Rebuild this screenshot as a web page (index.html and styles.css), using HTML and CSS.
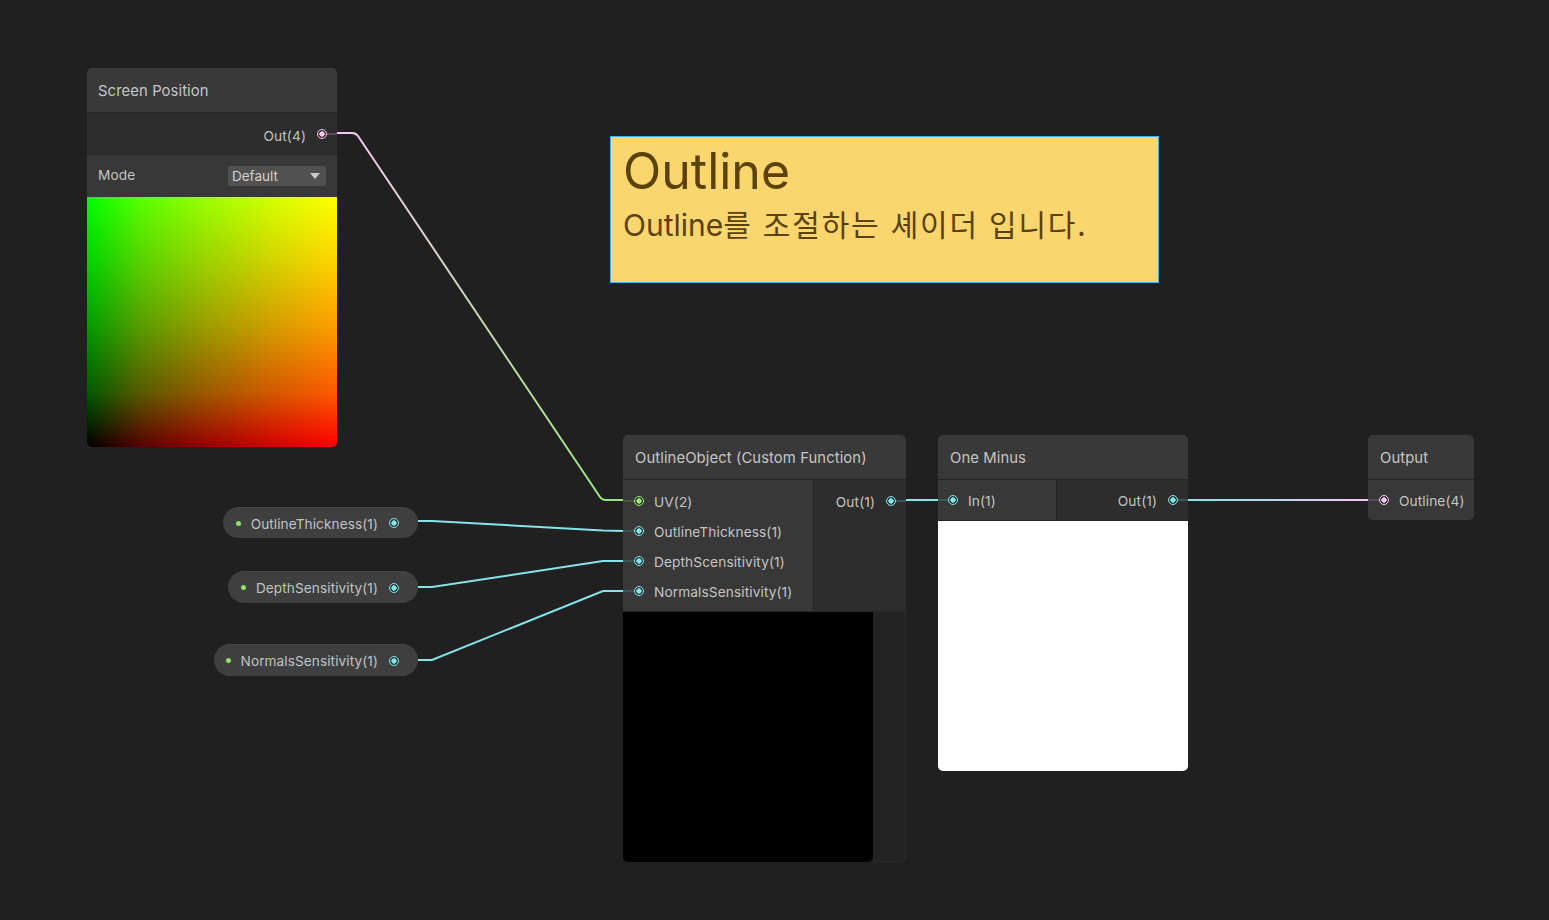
FILE: index.html
```html
<!DOCTYPE html>
<html lang="ko">
<head>
<meta charset="utf-8">
<title>Shader Graph</title>
<link rel="stylesheet" href="styles.css">
</head>
<body>
<div class="canvas">
  <svg class="wires" width="1549" height="920" viewBox="0 0 1549 920">
    <defs>
      <linearGradient id="g1" gradientUnits="userSpaceOnUse" x1="337" y1="133" x2="623" y2="500">
        <stop offset="0" stop-color="#f6c8f0"/>
        <stop offset="1" stop-color="#98e67a"/>
      </linearGradient>
      <linearGradient id="g2" gradientUnits="userSpaceOnUse" x1="1188" y1="500" x2="1368" y2="500">
        <stop offset="0" stop-color="#84e4e7"/>
        <stop offset="1" stop-color="#f6c8f0"/>
      </linearGradient>
    </defs>
    <path d="M337 133 L352 133 Q356 133 358 136 L600 497 Q602 500 606 500 L623 500" stroke="url(#g1)" stroke-width="2" fill="none"/>
    <path d="M418 521 L432 521 L603 530.5 L623 531" stroke="#84e4e7" stroke-width="2" fill="none"/>
    <path d="M418 587 L432 587 L603 561 L623 561" stroke="#84e4e7" stroke-width="2" fill="none"/>
    <path d="M418 660 L432 660 L603 591 L623 591" stroke="#84e4e7" stroke-width="2" fill="none"/>
    <path d="M906 500 L938 500" stroke="#84e4e7" stroke-width="2" fill="none"/>
    <path d="M1188 500 L1368 500" stroke="url(#g2)" stroke-width="2" fill="none"/>
  </svg>

  <div class="node node-sp">
    <div class="node-head">Screen Position</div>
    <div class="row row-out">
      <span class="label">Out(4)</span>
      <span class="port pink"></span><span class="stub stub-pink"></span>
    </div>
    <div class="row row-mode">
      <span class="label">Mode</span>
      <span class="dropdown">Default<span class="caret"></span></span>
    </div>
    <div class="preview preview-grad"></div>
  </div>

  <div class="sticky">
    <div class="sticky-title">Outline</div>
    <div class="sticky-text">Outline<span class="ko">를 조절하는 셰이더 입니다.</span></div>
  </div>

  <div class="prop prop-1">
    <span class="dot"></span><span class="prop-label">OutlineThickness(1)</span><span class="port cyan"></span>
  </div>
  <div class="prop prop-2">
    <span class="dot"></span><span class="prop-label">DepthSensitivity(1)</span><span class="port cyan"></span>
  </div>
  <div class="prop prop-3">
    <span class="dot"></span><span class="prop-label">NormalsSensitivity(1)</span><span class="port cyan"></span>
  </div>

  <div class="node node-cf">
    <div class="node-head">OutlineObject (Custom Function)</div>
    <div class="ports">
      <div class="inputs inputs-cf">
        <div class="in-row"><span class="stub stub-green"></span><span class="port green"></span><span class="label">UV(2)</span></div>
        <div class="in-row"><span class="stub stub-cyan"></span><span class="port cyan"></span><span class="label">OutlineThickness(1)</span></div>
        <div class="in-row"><span class="stub stub-cyan"></span><span class="port cyan"></span><span class="label">DepthScensitivity(1)</span></div>
        <div class="in-row"><span class="stub stub-cyan"></span><span class="port cyan"></span><span class="label">NormalsSensitivity(1)</span></div>
      </div>
      <div class="outputs outputs-cf">
        <div class="out-row"><span class="label">Out(1)</span><span class="port cyan"></span><span class="stub stub-cyan"></span></div>
      </div>
    </div>
    <div class="preview-wrap">
      <div class="preview preview-black"></div>
      <div class="preview-rest"></div>
    </div>
  </div>

  <div class="node node-om">
    <div class="node-head">One Minus</div>
    <div class="ports ports-single">
      <div class="inputs inputs-om">
        <div class="in-row in-row-om"><span class="stub stub-cyan"></span><span class="port cyan"></span><span class="label">In(1)</span></div>
      </div>
      <div class="outputs outputs-om">
        <div class="out-row out-row-om"><span class="label">Out(1)</span><span class="port cyan"></span><span class="stub stub-cyan"></span></div>
      </div>
    </div>
    <div class="preview preview-white"></div>
  </div>

  <div class="node node-out">
    <div class="node-head">Output</div>
    <div class="ports ports-single">
      <div class="inputs inputs-out">
        <div class="in-row in-row-om"><span class="stub stub-pink"></span><span class="port pink"></span><span class="label">Outline(4)</span></div>
      </div>
    </div>
  </div>
</div>
</body>
</html>
```

FILE: styles.css
```css
* { box-sizing: border-box; }
html, body {
  margin: 0;
  padding: 0;
  background: #202020;
}
body {
  font-family: "Inter", "Noto Sans", "Noto Sans CJK KR", sans-serif;
  color: #c4c4c4;
}
.canvas {
  position: relative;
  width: 1549px;
  height: 920px;
  overflow: hidden;
  background: #202020;
}
.wires {
  position: absolute;
  left: 0;
  top: 0;
}

/* generic node */
.node {
  position: absolute;
  display: flex;
  flex-direction: column;
  border-radius: 5px;
}
.node-head {
  height: 45px;
  background: #393939;
  border-radius: 5px 5px 0 0;
  border-bottom: 1px solid #262626;
  padding: 2px 0 0 12px;
  display: flex;
  align-items: center;
  font-size: 14.8px;
  color: #c6c6c6;
  letter-spacing: 0.1px;
}
.label {
  font-size: 13.7px;
  color: #c4c4c4;
  white-space: nowrap;
  letter-spacing: 0.1px;
}

/* ports */
.port {
  width: 10px;
  height: 10px;
  border-radius: 50%;
  flex: none;
}
.port.cyan  { border: 1.5px solid #84e4e7; background: radial-gradient(circle, #84e4e7 0 2.4px, #2b3a3b 2.9px); }
.port.green { border: 1.5px solid #98e67a; background: radial-gradient(circle, #98e67a 0 2.4px, #2f3a2b 2.9px); }
.port.pink  { border: 1.5px solid #f6c8f0; background: radial-gradient(circle, #f6c8f0 0 2.4px, #3b2f3a 2.9px); }
.stub {
  height: 2px;
  flex: none;
}
.stub-cyan  { background: #3e5556; }
.stub-green { background: #46563f; }
.stub-pink  { background: #5a4a58; }

/* Screen Position */
.node-sp {
  left: 87px;
  top: 68px;
  width: 250px;
}
.node-sp .node-head { padding-left: 11px; }
.row {
  display: flex;
  align-items: center;
}
.row-out {
  height: 42px;
  background: #2d2d2d;
  justify-content: flex-end;
  border-bottom: 1px solid #262626;
}
.row-out .label { margin-right: 11px; margin-top: 4px; }
.row-out .stub { width: 10px; }
.row-mode {
  height: 42px;
  background: #383838;
  justify-content: space-between;
  padding: 0 11px 0 11px;
}
.row-mode .label { margin-top: -2px; }
.dropdown {
  width: 98px;
  height: 20px;
  background: #515151;
  border-radius: 3px;
  display: flex;
  align-items: center;
  justify-content: space-between;
  padding: 0 6px 0 4px;
  font-size: 13.5px;
  color: #d2d2d2;
  margin-top: -1px;
}
.caret {
  width: 0;
  height: 0;
  border-left: 5px solid transparent;
  border-right: 5px solid transparent;
  border-top: 6px solid #c8c8c8;
}
.preview {
  width: 250px;
  height: 250px;
  border-radius: 0 0 5px 5px;
  flex: none;
}
.preview-grad {
  background:
    linear-gradient(to right, #000 0%, #5a0000 22%, #9c0000 48%, #d20000 74%, #ff0000 100%),
    linear-gradient(to bottom, #00ff00 0%, #00d200 26%, #009c00 52%, #005a00 78%, #000000 100%);
  background-blend-mode: screen;
}

/* sticky note */
.sticky {
  position: absolute;
  left: 610px;
  top: 136px;
  width: 549px;
  height: 147px;
  background: #fbd66f;
  border: 1px solid #3fb1ea;
  padding: 2px 12px 0 12px;
  color: #5a4208;
}
.sticky-title {
  font-size: 50px;
  line-height: 64px;
}
.sticky-text {
  font-family: "Inter", "Noto Sans CJK KR", sans-serif;
  font-size: 30px;
  line-height: 40px;
  margin-top: 0;
}
.ko {
  font-family: "Noto Sans CJK KR", sans-serif;
  letter-spacing: 1.8px;
}

/* property pills */
.prop {
  position: absolute;
  right: 1131px;
  height: 31px;
  border-radius: 16px;
  background: #3f3f3f;
  border-top: 1px solid #464646;
  display: flex;
  align-items: center;
  padding: 0 19px 0 13px;
}
.prop-1 { top: 507px; }
.prop-2 { top: 571px; height: 32px; padding-left: 13px; }
.prop-3 { top: 644px; height: 32px; padding-left: 12px; }
.dot {
  width: 5px;
  height: 5px;
  border-radius: 50%;
  background: #8fe35f;
  margin-right: 10px;
  flex: none;
}
.prop-label {
  font-size: 13.6px;
  color: #c2c2c2;
  white-space: nowrap;
  margin-right: 11px;
  letter-spacing: 0.1px;
  margin-top: 1px;
}

/* custom function node */
.node-cf {
  left: 623px;
  top: 435px;
  width: 283px;
}
.ports {
  display: flex;
  border-bottom: 1px solid #262626;
}
.inputs {
  background: #383838;
  border-right: 1px solid #262626;
}
.outputs {
  background: #2d2d2d;
  flex: 1;
  display: flex;
  flex-direction: column;
  align-items: flex-end;
}
.inputs-cf {
  width: 191px;
  padding: 6px 0 5px 0;
}
.outputs-cf { padding-top: 6px; }
.in-row {
  height: 30px;
  display: flex;
  align-items: center;
}
.in-row .stub { width: 11px; }
.in-row .label { margin-left: 10px; margin-top: 2px; }
.out-row {
  height: 30px;
  display: flex;
  align-items: center;
}
.out-row .label { margin-right: 11px; margin-top: 2px; }
.out-row .stub { width: 10px; }
.preview-wrap {
  display: flex;
  height: 250px;
}
.preview-black { background: #000; }
.preview-rest {
  flex: 1;
  background: #232323;
  border: 1px solid #2c2c2c;
  border-top: none;
  border-left: none;
  border-radius: 0 0 6px 0;
}

/* one minus */
.node-om {
  left: 938px;
  top: 435px;
  width: 250px;
}
.inputs-om { width: 119px; }
.in-row-om { height: 40px; }
.in-row-om .stub { width: 10px; }
.out-row-om { height: 40px; }
.preview-white { background: #fff; }

/* output node */
.node-out {
  left: 1368px;
  top: 435px;
  width: 106px;
}
.inputs-out {
  flex: 1;
  border-right: none;
  border-radius: 0 0 5px 5px;
}
.node-out .ports { border-bottom: none; }
.inputs-out .stub { width: 11px; }
```
